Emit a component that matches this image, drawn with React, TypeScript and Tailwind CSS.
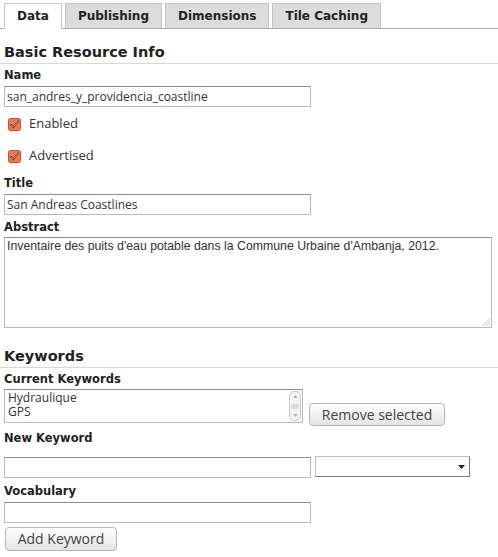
const label = "block text-[11.5px] font-bold text-[#222] leading-[14px] font-['DejaVu_Sans',sans-serif]"
const input = "block w-[307px] h-[21px] border border-[#b9b9b9] border-t-[#8f8f8f] bg-white px-[2px] text-[12px] text-[#333] font-['Open_Sans',sans-serif] leading-[19px]"
const button = "rounded-[4px] border border-[#b5b5b5] bg-gradient-to-b from-white to-[#e4e4e4] text-[14px] text-[#444] font-['Open_Sans',sans-serif]"

function Check() {
  return (
    <svg width="13" height="13" viewBox="0 0 13 13" className="shrink-0">
      <rect x="0.5" y="0.5" width="12" height="12" rx="2" fill="#ec7b55" stroke="#c4532f" />
      <path d="M2.8 6.6 L5.4 9.2 L10.3 3.2" stroke="#5a2b1c" strokeWidth="1.8" fill="none" strokeLinecap="round" />
      <path d="M2.8 6.6 L5.4 9.2 L10.3 3.2" stroke="#f6d2c3" strokeWidth="0.7" fill="none" strokeLinecap="round" />
    </svg>
  )
}

function Heading({ children, className }: { children: React.ReactNode; className: string }) {
  return (
    <div className={`border-b border-[#d6dfc2] pb-[2px] pl-[4px] ${className}`}>
      <h2 className="text-[14.5px] font-bold text-[#222] leading-[18px] font-['DejaVu_Sans',sans-serif]">{children}</h2>
    </div>
  )
}

const tabs = ['Data', 'Publishing', 'Dimensions', 'Tile Caching']

export default function App() {
  return (
    <div className="w-[498px] h-[557px] bg-white overflow-hidden font-['DejaVu_Sans',sans-serif]">
      {/* Tabs */}
      <div className="flex items-end gap-[3px] pl-[4px] pt-[3px] border-b border-[#aaaaaa]">
        {tabs.map((t, i) => (
          <div
            key={t}
            className={`px-[12px] -mb-px border border-[#c6c6c6] text-[12px] font-bold text-[#222] leading-[24px] ${
              i === 0 ? 'bg-white h-[26px] border-b-white' : 'bg-[#dcdcdc] h-[26px] border-b-[#aaaaaa]'
            }`}
          >
            {t}
          </div>
        ))}
      </div>

      <Heading className="mt-[14px]">Basic Resource Info</Heading>

      <div className="pl-[4px]">
        <label className={`${label} mt-[4px]`}>Name</label>
        <input className={`${input} mt-[4px]`} defaultValue="san_andres_y_providencia_coastline" />

        <div className="flex items-center gap-[8px] pl-[4px] mt-[10px] h-[14px]">
          <Check />
          <span className="text-[13px] text-[#333] font-['Open_Sans',sans-serif]">Enabled</span>
        </div>
        <div className="flex items-center gap-[8px] pl-[4px] mt-[18px] h-[14px]">
          <Check />
          <span className="text-[13px] text-[#333] font-['Open_Sans',sans-serif]">Advertised</span>
        </div>

        <label className={`${label} mt-[13px]`}>Title</label>
        <input className={`${input} mt-[4px]`} defaultValue="San Andreas Coastlines" />

        <label className={`${label} mt-[5px]`}>Abstract</label>
        <div className="relative mt-[3px] w-[488px] h-[91px]">
          <textarea
            className="block w-full h-full border border-[#b9b9b9] border-t-[#8f8f8f] px-[2px] py-[1px] text-[12.3px] text-[#333] leading-[15px] font-['Liberation_Sans',sans-serif] resize-none"
            defaultValue="Inventaire des puits d'eau potable dans la Commune Urbaine d'Ambanja, 2012."
          />
          <svg width="8" height="8" viewBox="0 0 8 8" className="absolute right-[2px] bottom-[2px]">
            {[[7, 1], [7, 3], [5, 3], [7, 5], [5, 5], [3, 5], [7, 7], [5, 7], [3, 7], [1, 7]].map(([x, y]) => (
              <rect key={`${x}-${y}`} x={x - 0.5} y={y - 0.5} width="1" height="1" fill="#a8a8a8" />
            ))}
          </svg>
        </div>
      </div>

      <Heading className="mt-[19px]">Keywords</Heading>

      <div className="pl-[4px]">
        <label className={`${label} mt-[4px]`}>Current Keywords</label>
        <div className="flex items-end gap-[6px] mt-[3px]">
          <div className="flex w-[299px] h-[34px] border border-[#b9b9b9] border-t-[#8f8f8f] bg-white">
            <div className="flex-1 px-[3px] pt-[1px] text-[12px] leading-[14px] text-[#333] font-['Open_Sans',sans-serif]">
              <div>Hydraulique</div>
              <div>GPS</div>
            </div>
            <div className="w-[12px] my-[1px] mr-[1px] rounded-[5px] border border-[#c8c8c8] bg-[#f2f2f2] flex flex-col items-center justify-between py-[3px]">
              <svg width="5" height="3" viewBox="0 0 6 4"><path d="M0 4 L3 0 L6 4 Z" fill="#b0b0b0" /></svg>
              <div className="w-[8px] h-[5px] rounded-full bg-[#d8d8d8]" />
              <svg width="5" height="3" viewBox="0 0 6 4"><path d="M0 0 L3 4 L6 0 Z" fill="#b0b0b0" /></svg>
            </div>
          </div>
          <button className={`${button} -mb-[3px] h-[23px] w-[136px] leading-[21px]`}>Remove selected</button>
        </div>

        <label className={`${label} mt-[8px]`}>New Keyword</label>
        <div className="flex items-start gap-[4px] mt-[12px]">
          <input className={input} />
          <div className="relative -mt-px w-[155px] h-[21px] border border-[#c0c0c0] border-r-[#7a7a7a] border-b-[#7a7a7a] bg-white">
            <svg width="7" height="4" viewBox="0 0 7 4" className="absolute right-[4px] top-[8px]">
              <path d="M0 0 L7 0 L3.5 4 Z" fill="#222" />
            </svg>
          </div>
        </div>

        <label className={`${label} mt-[6px]`}>Vocabulary</label>
        <input className={`${input} mt-[4px]`} />

        <button className={`${button} block mt-[4px] ml-[1px] h-[24px] w-[112px] leading-[22px]`}>Add Keyword</button>
      </div>
    </div>
  )
}
